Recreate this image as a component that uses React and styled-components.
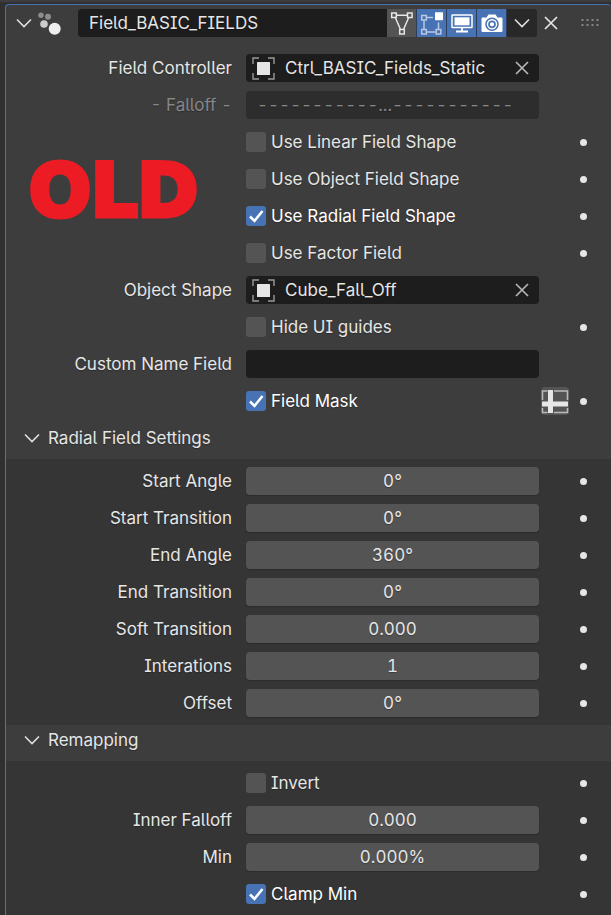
import React, { useId, useState } from 'react';
import styled, { createGlobalStyle } from 'styled-components';

const GlobalStyle = createGlobalStyle`
  * {
    box-sizing: border-box;
  }
  body {
    margin: 0;
    background: #303030;
    color: #e6e6e6;
    font-family: Inter, 'Liberation Sans', sans-serif;
    font-size: 17px;
    line-height: 20px;
    font-feature-settings: 'cv05', 'cv08';
    text-shadow: 0 1px 1px rgba(0, 0, 0, 0.3);
  }
  button,
  input {
    font: inherit;
    font-feature-settings: inherit;
    color: inherit;
    text-shadow: inherit;
    margin: 0;
    padding: 0;
    border: 0;
  }
  button {
    background: none;
    cursor: pointer;
  }
  svg {
    display: block;
  }
`;

const Editor = styled.main`
  border-top: 2px solid #3d3d3d;
  padding: 2px 0 0 5px;
`;

const Panel = styled.section`
  position: relative;
  overflow: hidden;
  border: 1px solid #4772b3;
  border-width: 1px 0 0 1px;
  border-radius: 4px 4px 0 0;
  background: #3d3d3d;
`;

const PanelHeader = styled.header`
  display: flex;
  align-items: center;
  height: 36px;
  padding: 0 12px 0 8px;
`;

const IconButton = styled.button`
  display: flex;
  flex: none;
  align-items: center;
  justify-content: center;
  width: ${props => props.$width || 28}px;
  height: 28px;
`;

const ModifierName = styled.div`
  display: flex;
  flex: 1;
  min-width: 0;
  height: 28px;
  margin-left: 14px;
  overflow: hidden;
  border-radius: 4px;
  background: #1d1d1d;

  input {
    flex: 1;
    min-width: 0;
    padding-left: 11px;
    background: none;
  }
`;

const ModeButton = styled(IconButton)`
  width: 30px;
  border-right: 1px solid #2b3d5a;
  background: ${props => (props.$active ? '#4772b3' : '#545454')};
`;

const MenuButton = styled(IconButton)`
  width: 30px;
  background: #282828;
`;

const Grip = styled.span`
  flex: none;
  margin-left: 16px;
`;

const Rows = styled.div`
  display: grid;
  gap: 9px;
  padding: ${props => props.$top || 8}px 0 8px;
  background: ${props => (props.$sub ? '#353535' : 'transparent')};
`;

const Label = styled.label`
  text-align: right;
  white-space: nowrap;
`;

const Cell = styled.div`
  grid-column: 3;
  display: flex;
  align-items: center;
  min-width: 0;
`;

const Tail = styled.div`
  grid-column: 4;
  display: flex;
  align-items: center;
  justify-content: space-between;
  height: 28px;
  padding: 0 24px 0 2px;
`;

const FormRow = styled.div`
  display: grid;
  grid-template-columns: minmax(0, 226fr) 14px minmax(0, 293fr) 72px;
  align-items: center;
  height: 28px;
`;

const FalloffRow = styled(FormRow)`
  color: #868686;
  font-feature-settings: 'cv05', 'cv08', 'tnum';
`;

const Dot = styled.button`
  width: 7px;
  height: 7px;
  margin-left: auto;
  border-radius: 50%;
  background: #e6e6e6;
`;

const TextInput = styled.input`
  width: 100%;
  height: 28px;
  padding: 0 8px;
  border-radius: 4px;
  background: #1d1d1d;
`;

const FalloffInput = styled(TextInput)`
  padding: 0 11px;
  background: #2d2d2d;
`;

const NumberInput = styled(TextInput)`
  background: #545454;
  text-align: center;
  font-feature-settings: 'cv05', 'cv08', 'tnum';
  box-shadow: 0 1px 1px #2c2c2c;
`;

const DataBlock = styled.div`
  display: flex;
  align-items: center;
  flex: 1;
  min-width: 0;
  height: 28px;
  padding: 0 3px 0 6px;
  border-radius: 4px;
  background: #1d1d1d;

  input {
    flex: 1;
    min-width: 0;
    padding-left: 10px;
    background: none;
  }
`;

const CheckLabel = styled.label`
  display: flex;
  align-items: center;
  gap: 5px;
  white-space: nowrap;
  color: ${props => (props.$on ? '#ffffff' : '#e6e6e6')};
`;

const CheckBox = styled.input`
  appearance: none;
  width: 20px;
  height: 20px;
  border-radius: 3px;
  background: #545454;

  &:checked {
    background: #4772b3
      url("data:image/svg+xml,%3Csvg xmlns='http://www.w3.org/2000/svg' viewBox='0 0 20 20'%3E%3Cpath d='M4 10.5l4.5 4.5 8-10' fill='none' stroke='white' stroke-width='2.5'/%3E%3C/svg%3E");
  }
`;

const MaskButton = styled(IconButton)`
  border-radius: 4px;
  background: #545454;
`;

const SubHeader = styled.button`
  display: flex;
  align-items: center;
  gap: 8px;
  width: 100%;
  height: 36px;
  padding: 0 0 6px 18px;
`;

const Stamp = styled.strong`
  position: absolute;
  top: 146px;
  left: 23px;
  color: #ed1c24;
  font-family: 'DejaVu Sans', Inter, sans-serif;
  font-size: 73px;
  font-weight: bold;
  line-height: 80px;
  text-shadow: none;
  -webkit-text-stroke: 5px #ed1c24;
  pointer-events: none;
`;

const Chevron = () => (
  <svg width="16" height="16" viewBox="0 0 16 16" fill="none" stroke="#e0e0e0" strokeWidth="1.6">
    <path d="M1 4.5l7 7 7-7" />
  </svg>
);

const Cross = ({ color = '#e6e6e6' }) => (
  <svg width="14" height="14" viewBox="0 0 14 14" fill="none" stroke={color} strokeWidth="1.7">
    <path d="M1 1l12 12M13 1L1 13" />
  </svg>
);

const ParticlesIcon = () => (
  <svg width="24" height="24" viewBox="0 0 24 24">
    <circle cx="4" cy="4.3" r="2.7" fill="#8e8e8e" />
    <circle cx="11" cy="5.7" r="3" fill="#8e8e8e" />
    <circle cx="7" cy="13" r="3.8" fill="#cccccc" />
    <circle cx="17.7" cy="17.7" r="6" fill="#eeeeee" />
  </svg>
);

const ObjectIcon = () => (
  <svg width="23" height="23" viewBox="0 0 23 23" fill="none" stroke="#999999" strokeWidth="1.4">
    <path d="M1 7V1h6M16 1h6v6M22 16v6h-6M7 22H1v-6" />
    <rect x="5" y="5" width="13" height="13" rx="0.6" fill="#e6e6e6" stroke="none" />
  </svg>
);

const VertexIcon = () => (
  <svg width="24" height="24" viewBox="0 0 24 24" fill="none" stroke="#e6e6e6" strokeWidth="1.5">
    <path d="M6.5 4.3h10.5M5.5 7l5 11.5M18.5 7l-5 11.5" />
    <path d="M1.7 2h4.6v4.6H1.7zM17.5 2h4.6v4.6h-4.6zM9.7 18.5h4.6v4.6H9.7z" />
  </svg>
);

const EditModeIcon = () => (
  <svg width="24" height="24" viewBox="0 0 24 24" fill="none" stroke="#b9c9e3" strokeWidth="1.5">
    <path d="M7 6.5h6M4 9.5v9M7 21h8.5M18.5 11.5v6.5" />
    <path d="M1.7 4.5h4.6v4.6H1.7zM1.7 18.5h4.6v4.6H1.7zM16.2 18.5h4.6v4.6h-4.6z" />
    <rect x="15" y="1.3" width="8" height="8" rx="0.5" fill="#ffffff" stroke="none" />
  </svg>
);

const ScreenIcon = () => (
  <svg width="24" height="24" viewBox="0 0 24 24" fill="none" stroke="#ffffff" strokeWidth="1.5">
    <rect x="2" y="4" width="20" height="12.5" rx="0.5" />
    <rect x="4.5" y="6.3" width="15" height="8" fill="#ffffff" stroke="none" />
    <path d="M12 16.5v4M6 20.5h12" strokeWidth="1.8" />
  </svg>
);

const CameraIcon = () => (
  <svg width="24" height="24" viewBox="0 0 24 24">
    <path d="M8.5 3.5h7l2 3H21.5a1 1 0 011 1v12.5a1 1 0 01-1 1h-19a1 1 0 01-1-1V7.5a1 1 0 011-1H6.5z" fill="#ffffff" />
    <circle cx="12" cy="13.3" r="6" fill="none" stroke="#4772b3" strokeWidth="1.5" />
    <circle cx="12" cy="13.3" r="3" fill="none" stroke="#4772b3" strokeWidth="1.7" />
  </svg>
);

const GripIcon = () => (
  <svg width="18" height="8" viewBox="0 0 18 8" fill="#858585">
    {[0, 5, 10, 15].map(x => (
      <React.Fragment key={x}>
        <rect x={x + 0.5} y="0" width="2" height="2" />
        <rect x={x + 0.5} y="5" width="2" height="2" />
      </React.Fragment>
    ))}
  </svg>
);

const MaskIcon = () => (
  <svg width="28" height="28" viewBox="0 0 28 28" fill="none">
    <path d="M1.5 13V4h5M13 4h13.5v9M1.5 21v4.5h5M13 25.5h13.5V21" stroke="#bbbbbb" strokeWidth="1.5" />
    <path d="M9.5 3v23M1 17h26" stroke="#e6e6e6" strokeWidth="5" />
  </svg>
);

const NumberRow = ({ label, value }) => {
  const id = useId();
  return (
    <FormRow>
      <Label htmlFor={id}>{label}</Label>
      <Cell>
        <NumberInput id={id} defaultValue={value} />
      </Cell>
      <Tail>
        <Dot aria-label={`Animate ${label}`} />
      </Tail>
    </FormRow>
  );
};

const CheckRow = ({ label, on = false, children }) => {
  const [checked, setChecked] = useState(on);
  return (
    <FormRow>
      <Cell>
        <CheckLabel $on={checked}>
          <CheckBox
            type="checkbox"
            checked={checked}
            onChange={e => setChecked(e.target.checked)}
          />
          {label}
        </CheckLabel>
      </Cell>
      <Tail>
        {children}
        <Dot aria-label={`Animate ${label}`} />
      </Tail>
    </FormRow>
  );
};

const DataRow = ({ label, value }) => {
  const id = useId();
  return (
    <FormRow>
      <Label htmlFor={id}>{label}</Label>
      <Cell>
        <DataBlock>
          <ObjectIcon />
          <input id={id} defaultValue={value} />
          <IconButton aria-label={`Clear ${label}`}>
            <Cross color="#b5b5b5" />
          </IconButton>
        </DataBlock>
      </Cell>
    </FormRow>
  );
};

const SubPanel = ({ title, children }) => {
  const [open, setOpen] = useState(true);
  return (
    <>
      <SubHeader aria-expanded={open} onClick={() => setOpen(!open)}>
        <Chevron />
        {title}
      </SubHeader>
      {open && <Rows $sub>{children}</Rows>}
    </>
  );
};

const radialSettings = [
  ['Start Angle', '0°'],
  ['Start Transition', '0°'],
  ['End Angle', '360°'],
  ['End Transition', '0°'],
  ['Soft Transition', '0.000'],
  ['Interations', '1'],
  ['Offset', '0°'],
];

const App = () => (
  <>
    <GlobalStyle />
    <Editor>
      <Panel>
        <PanelHeader>
          <IconButton $width={20} aria-label="Collapse">
            <Chevron />
          </IconButton>
          <IconButton $width={30} aria-label="Modifier type">
            <ParticlesIcon />
          </IconButton>
          <ModifierName>
            <input aria-label="Modifier name" defaultValue="Field_BASIC_FIELDS" />
            <ModeButton aria-label="On cage">
              <VertexIcon />
            </ModeButton>
            <ModeButton $active aria-label="Edit mode">
              <EditModeIcon />
            </ModeButton>
            <ModeButton $active aria-label="Realtime">
              <ScreenIcon />
            </ModeButton>
            <ModeButton $active aria-label="Render">
              <CameraIcon />
            </ModeButton>
            <MenuButton aria-label="More">
              <Chevron />
            </MenuButton>
          </ModifierName>
          <IconButton aria-label="Remove modifier">
            <Cross />
          </IconButton>
          <Grip>
            <GripIcon />
          </Grip>
        </PanelHeader>

        <Rows $top={13}>
          <DataRow label="Field Controller" value="Ctrl_BASIC_Fields_Static" />
          <FalloffRow>
            <Label htmlFor="falloff">- Falloff -</Label>
            <Cell>
              <FalloffInput
                id="falloff"
                disabled
                defaultValue="-----------...-----------"
              />
            </Cell>
          </FalloffRow>
          <CheckRow label="Use Linear Field Shape" />
          <CheckRow label="Use Object Field Shape" />
          <CheckRow label="Use Radial Field Shape" on />
          <CheckRow label="Use Factor Field" />
          <DataRow label="Object Shape" value="Cube_Fall_Off" />
          <CheckRow label="Hide UI guides" />
          <FormRow>
            <Label htmlFor="custom-name">Custom Name Field</Label>
            <Cell>
              <TextInput id="custom-name" />
            </Cell>
          </FormRow>
          <CheckRow label="Field Mask" on>
            <MaskButton aria-label="Use attribute">
              <MaskIcon />
            </MaskButton>
          </CheckRow>
        </Rows>

        <SubPanel title="Radial Field Settings">
          {radialSettings.map(([label, value]) => (
            <NumberRow key={label} label={label} value={value} />
          ))}
        </SubPanel>
        <SubPanel title="Remapping">
          <CheckRow label="Invert" />
          <NumberRow label="Inner Falloff" value="0.000" />
          <NumberRow label="Min" value="0.000%" />
          <CheckRow label="Clamp Min" on />
        </SubPanel>

        <Stamp>OLD</Stamp>
      </Panel>
    </Editor>
  </>
);

export default App;
